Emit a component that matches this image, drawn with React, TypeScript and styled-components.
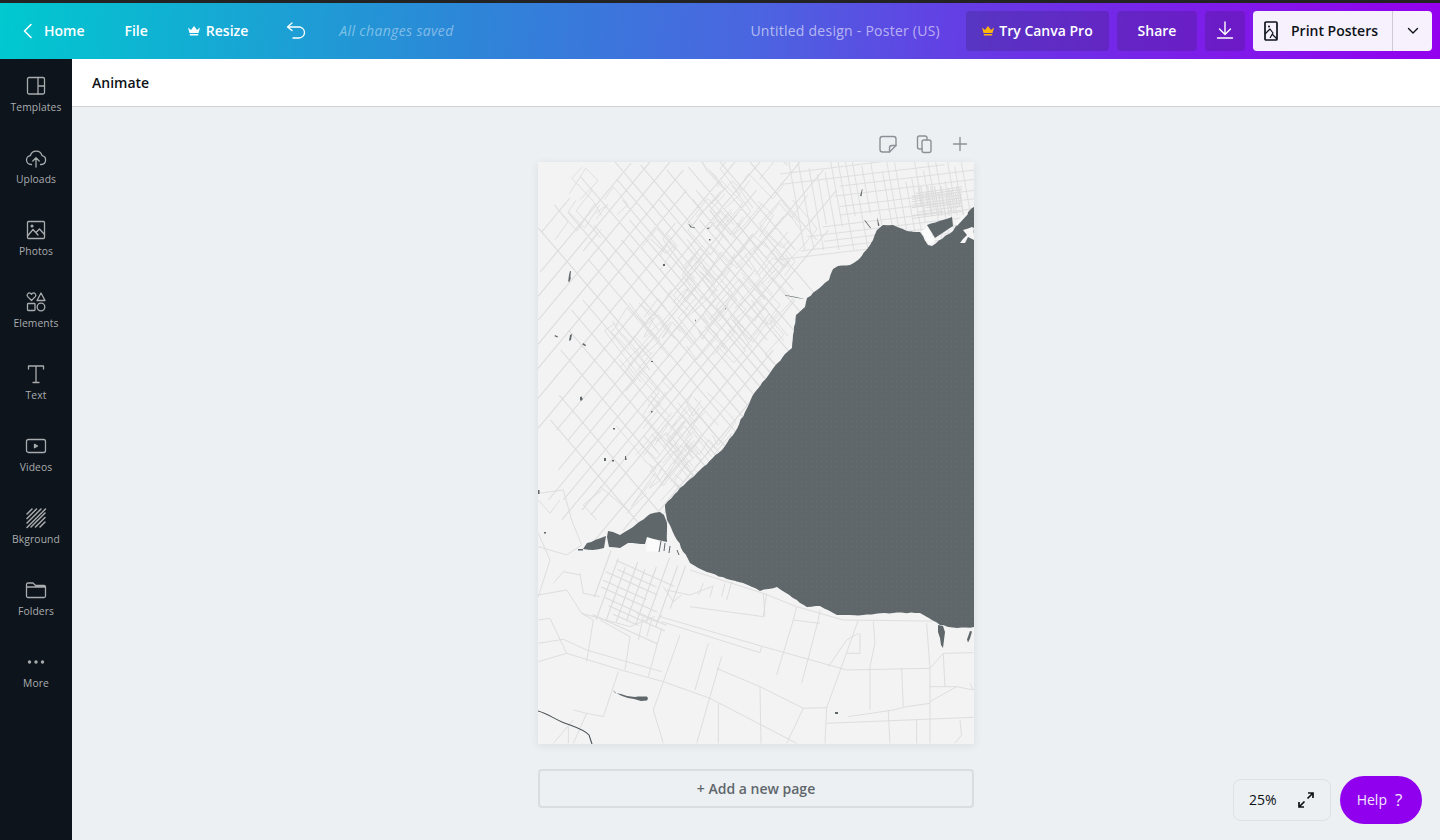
import React from 'react';
import styled, { createGlobalStyle } from 'styled-components';

const GlobalStyle = createGlobalStyle`
  html, body {
    margin: 0;
    padding: 0;
    height: 100%;
    overflow: hidden;
    background: #ecf0f3;
    font-family: "Open Sans", "Liberation Sans", sans-serif;
  }
  * { box-sizing: border-box; }
`;

const Shell = styled.div`
  display: flex;
  flex-direction: column;
  width: 1440px;
  height: 840px;
  position: relative;
  overflow: hidden;
`;

const TopStrip = styled.div`
  height: 3px;
  background: #232323;
`;

const TopBar = styled.header`
  height: 56px;
  display: flex;
  align-items: center;
  padding: 0 8px 0 22px;
  color: #fff;
  background: linear-gradient(93deg, #00c9cf 0%, #2e85d8 33%, #4a66e0 52%, #6a35e5 70%, #9400ee 100%);
`;

const NavItem = styled.div<{ $gap?: number; $left?: number }>`
  display: flex;
  align-items: center;
  gap: ${p => p.$gap ?? 0}px;
  margin-left: ${p => p.$left ?? 0}px;
  padding-bottom: 1px;
  font-size: 14px;
  font-weight: 600;
  white-space: nowrap;
`;

const Saved = styled.span`
  margin-left: 33px;
  padding-bottom: 1px;
  font-size: 14px;
  font-style: italic;
  letter-spacing: 0.35px;
  color: rgba(255, 255, 255, 0.42);
  white-space: nowrap;
`;

const Title = styled.span`
  margin-left: auto;
  margin-right: 26px;
  padding-bottom: 1px;
  font-size: 14px;
  font-weight: 500;
  letter-spacing: 0.25px;
  color: rgba(255, 255, 255, 0.58);
  white-space: nowrap;
`;

const BarButton = styled.button<{ $width: number }>`
  width: ${p => p.$width}px;
  height: 40px;
  margin-right: 8px;
  display: flex;
  align-items: center;
  justify-content: center;
  gap: 5px;
  padding: 0 0 2px;
  border: 0;
  border-radius: 4px;
  color: #fff;
  background: rgba(34, 28, 60, 0.2);
  font: 600 14px "Open Sans", sans-serif;
`;

const PrintGroup = styled.div`
  width: 179px;
  height: 40px;
  display: flex;
  border-radius: 4px;
  background: #f7f1fd;
  color: #0e1318;
  font-size: 14px;
  font-weight: 600;
`;

const PrintMain = styled.div`
  width: 140px;
  display: flex;
  align-items: center;
  gap: 12px;
  padding: 0 0 1px 10px;
  border-right: 1px solid #cfc9d6;
`;

const PrintCaret = styled.div`
  flex: 1;
  display: flex;
  align-items: center;
  justify-content: center;
`;

const Body = styled.div`
  flex: 1;
  display: flex;
  min-height: 0;
`;

const Sidebar = styled.nav`
  width: 72px;
  flex: none;
  background: #0e141b;
`;

const SideItem = styled.div`
  height: 72px;
  padding-top: 15px;
  display: flex;
  flex-direction: column;
  align-items: center;
  color: #a9acaf;
  font-size: 10.3px;
  font-weight: 500;
  line-height: 14px;
  letter-spacing: 0.1px;
`;

const SideIcon = styled.svg`
  width: 24px;
  height: 24px;
  margin-bottom: 2px;
  fill: none;
  stroke: currentColor;
  stroke-width: 1.3;
  stroke-linecap: round;
  stroke-linejoin: round;
`;

const Main = styled.main`
  flex: 1;
  display: flex;
  flex-direction: column;
  min-width: 0;
`;

const SubBar = styled.div`
  height: 48px;
  flex: none;
  display: flex;
  align-items: center;
  padding-left: 20px;
  background: #fff;
  border-bottom: 1px solid #cfd2d5;
  color: #0e1318;
  font-size: 14px;
  font-weight: 600;
`;

const Canvas = styled.div`
  flex: 1;
  display: flex;
  flex-direction: column;
  align-items: center;
  padding-top: 25px;
`;

const PageTools = styled.div`
  width: 436px;
  height: 24px;
  margin-bottom: 6px;
  padding-right: 2px;
  display: flex;
  justify-content: flex-end;
  gap: 12px;
  color: #8b9196;
`;

const ToolIcon = styled.svg`
  width: 24px;
  height: 24px;
  fill: none;
  stroke: currentColor;
  stroke-width: 1.4;
  stroke-linecap: round;
  stroke-linejoin: round;
`;

const Page = styled.svg`
  display: block;
  width: 436px;
  height: 582px;
  flex: none;
  background: #f3f3f3;
  box-shadow: 0 2px 8px rgba(60, 70, 80, 0.1);
`;

const AddPage = styled.button`
  width: 436px;
  height: 39px;
  margin-top: 25px;
  border: 2px solid #d8dde1;
  border-radius: 4px;
  background: transparent;
  color: #5f666c;
  font: 600 14px "Open Sans", sans-serif;
`;

const ZoomBox = styled.div`
  position: absolute;
  left: 1233px;
  top: 779px;
  width: 98px;
  height: 42px;
  display: flex;
  align-items: center;
  justify-content: space-between;
  padding: 0 15px 1px 15px;
  border: 1px solid #dde1e5;
  border-radius: 8px;
  color: #0e1318;
  font-size: 14px;
  font-weight: 500;
`;

const HelpButton = styled.div`
  position: absolute;
  left: 1340px;
  top: 776px;
  width: 82px;
  height: 48px;
  display: flex;
  align-items: center;
  justify-content: center;
  gap: 8px;
  padding: 0 3px 2px 0;
  border-radius: 24px;
  background: #9100ee;
  color: #f4e6ff;
  font-size: 14px;
`;

const HelpMark = styled.span`
  font-size: 17px;
  line-height: 1;
`;

const sideItems: { label: string; icon: React.ReactNode }[] = [
  { label: 'Templates', icon: <><rect x="3.500" y="3.500" width="17" height="16.500" rx="1.500" /><path d="M14 3.500V20M14 12h6.500" /></> },
  { label: 'Uploads', icon: <><path d="M7.500 18.500H7a4.500 4.500 0 0 1-.6-8.960A6 6 0 0 1 18 9.600a4.500 4.500 0 0 1-.6 8.900h-.9" /><path d="M12 21v-9M8.800 15 12 11.800 15.200 15" /></> },
  { label: 'Photos', icon: <><rect x="3.500" y="3.500" width="17" height="17" rx="1" /><circle cx="8" cy="8" r=".9" fill="currentColor" /><path d="M3.500 18 9 11.500l5 5.500M12 14.500l3.500-3.500 5 5.500" /></> },
  { label: 'Elements', icon: <><path d="M7.500 10.500 3.700 6.600a2.200 2.200 0 0 1 3.100-3.100l.7.7.7-.7a2.200 2.200 0 0 1 3.100 3.100z" /><path d="M17 3l4 7.500h-8z" /><rect x="3.500" y="13.500" width="7.500" height="7" rx=".8" /><circle cx="17" cy="17" r="3.800" /></> },
  { label: 'Text', icon: <path d="M4.500 7V4h15v3M12 4v16.500M9 20.500h6" /> },
  { label: 'Videos', icon: <><rect x="2.500" y="5.500" width="19" height="13" rx="2" /><path d="m10.500 10.300 3 1.700-3 1.700z" fill="currentColor" /></> },
  { label: 'Bkground', icon: <path d="M3 8l5-5M3 12.500 12.500 3M3 17 17 3M3 21.500 21.500 3M7 21 21 7M11.500 21 21 11.500M16 21l5-5" strokeWidth="1.500" /> },
  { label: 'Folders', icon: <path d="M2.500 18V6.500a1.500 1.500 0 0 1 1.500-1.500h5l2.500 2.500h8.500a1.500 1.500 0 0 1 1.500 1.500v9a1.500 1.500 0 0 1-1.500 1.500H4a1.500 1.500 0 0 1-1.500-1.500zM2.500 9h19" /> },
  { label: 'More', icon: <g fill="currentColor" stroke="none"><circle cx="5.500" cy="12" r="1.700" /><circle cx="12" cy="12" r="1.700" /><circle cx="18.500" cy="12" r="1.700" /></g> },
];

// small seeded random so the map is the same on every load
const makeRandom = (seed: number) => () => {
  seed = (seed * 16807) % 2147483647;
  return seed / 2147483647;
};

// shoreline: adds small notches between the traced points
const roughen = (points: number[][], seed: number, amount = 1.1) => {
  const rnd = makeRandom(seed);
  let d = '';
  points.forEach((pt, i) => {
    d += `${i ? 'L' : 'M'}${pt[0]} ${pt[1]}`;
    const next = points[i + 1];
    if (!next) return;
    const dist = Math.hypot(next[0] - pt[0], next[1] - pt[1]);
    const steps = Math.floor(dist / 4);
    for (let s = 1; s < steps; s++) {
      const t = s / steps;
      const x = pt[0] + (next[0] - pt[0]) * t + (rnd() - 0.5) * amount;
      const y = pt[1] + (next[1] - pt[1]) * t + (rnd() - 0.5) * amount;
      d += `L${x.toFixed(1)} ${y.toFixed(1)}`;
    }
  });
  return d + 'Z';
};

// long concession roads: [x where the line meets y=162, first y, last y]
const nwSe = [
  [330, 420, 540], [360, 395, 530], [400, 350, 560], [425, 330, 520], [445, 310, 560], [465, 300, 540],
  [482, 228, 500], [505, 260, 540], [525, 212, 480], [540, 225, 510], [555, 240, 500], [568, 177, 430],
  [580, 220, 470], [590, 200, 430], [602, 180, 440], [615, 162, 340], [627, 200, 420], [638, 165, 310],
  [650, 220, 380], [660, 170, 270], [672, 190, 350], [684, 167, 290], [702, 170, 300], [720, 162, 250], [750, 162, 240],
];

const neSw = [
  [600, 198, 232], [632, 163, 272], [650, 162, 300], [670, 162, 320], [690, 170, 345], [710, 190, 370],
  [735, 162, 400], [760, 162, 440], [780, 190, 430], [800, 162, 440], [815, 230, 470], [830, 170, 500],
  [845, 270, 500], [860, 190, 520], [872, 260, 510], [885, 230, 515], [910, 300, 540], [930, 350, 530], [950, 380, 530],
];

const concessions = () => {
  let d = '';
  nwSe.forEach(([c, y0, y1]) => {
    d += `M${(c + (y0 - 162) / 1.17).toFixed(1)} ${y0}L${(c + (y1 - 162) / 1.17).toFixed(1)} ${y1}`;
  });
  neSw.forEach(([c, y0, y1]) => {
    d += `M${(c - (y0 - 162) / 1.2).toFixed(1)} ${y0}L${(c - (y1 - 162) / 1.2).toFixed(1)} ${y1}`;
  });
  return d;
};

// suburb web: short bent pieces that follow the two road directions
const webRoads = (seed: number, count: number, cx: number, cy: number, rx: number, ry: number) => {
  const rnd = makeRandom(seed);
  let d = '';
  for (let i = 0; i < count; i++) {
    const angle = rnd() * Math.PI * 2;
    const reach = Math.sqrt(rnd());
    let x = cx + Math.cos(angle) * rx * reach;
    let y = cy + Math.sin(angle) * ry * reach;
    let alongNwSe = rnd() > 0.5;
    d += `M${x.toFixed(1)} ${y.toFixed(1)}`;
    const bends = 2 + Math.floor(rnd() * 3);
    for (let b = 0; b < bends; b++) {
      const len = 10 + rnd() * 24;
      const sign = rnd() > 0.5 ? 1 : -1;
      const dx = (alongNwSe ? 0.65 : -0.64) * len * sign;
      const dy = (alongNwSe ? 0.76 : 0.77) * len * sign;
      x += dx + (rnd() - 0.5) * 6;
      y += dy + (rnd() - 0.5) * 6;
      d += `L${x.toFixed(1)} ${y.toFixed(1)}`;
      if (rnd() > 0.35) alongNwSe = !alongNwSe;
    }
  }
  return d;
};

// straight street grid, walked with uneven spacing
const streetGrid = (
  seed: number, count: number, x0: number, y0: number,
  sx: number, sy: number, dx: number, dy: number, len: number,
) => {
  const rnd = makeRandom(seed);
  let d = '';
  let walk = 0;
  for (let i = 0; i < count; i++) {
    walk += 0.7 + rnd() * 0.6;
    const from = rnd() < 0.6 ? rnd() * len * 0.3 : 0;
    const to = rnd() < 0.6 ? len * (0.6 + rnd() * 0.4) : len;
    const ax = x0 + sx * walk;
    const ay = y0 + sy * walk;
    d += `M${(ax + dx * from).toFixed(1)} ${(ay + dy * from).toFixed(1)}L${(ax + dx * to).toFixed(1)} ${(ay + dy * to).toFixed(1)}`;
  }
  return d;
};

const lake = roughen([
  [974, 207], [972, 208], [956, 226], [953, 231], [932, 246], [928, 245], [920, 232], [915, 232], [907, 231],
  [893, 225], [883, 225], [877, 230], [873, 240], [870, 245], [858, 260], [850, 265], [838, 266], [833, 269],
  [829, 280], [817, 290], [807, 298], [805, 307], [796, 315], [793, 335], [792, 348], [785, 354], [770, 373],
  [755, 392], [745, 412], [735, 432], [722, 450], [700, 470], [680, 488], [665, 505], [665, 507], [667, 520],
  [677, 540], [690, 563], [707, 572], [727, 579], [743, 583], [760, 591], [777, 587], [793, 598], [807, 607],
  [820, 606], [837, 615], [863, 615], [893, 613], [920, 613], [940, 625], [957, 628], [974, 627],
], 5);

const harbour = roughen([
  [660, 512], [650, 514], [633, 527], [620, 535], [613, 532], [608, 531], [607, 537], [609, 547], [620, 548],
  [628, 543], [645, 544], [647, 537], [658, 540], [667, 542], [667, 523], [664, 515],
], 9, 0.6);

const harbourTail = roughen([
  [606, 536], [595, 540], [587, 543], [583, 549], [593, 550], [604, 548],
], 13, 0.8);

const innerBay = roughen([
  [927, 225], [952, 217], [953, 226], [944, 232], [935, 238], [932, 233],
], 17, 0.6);

const portLands = roughen([
  [960, 243], [967, 235], [963, 230], [972, 227], [974, 228], [974, 240], [968, 237], [965, 243],
], 19, 1);

const specks = [
  'M569 275l1-4 1 .300-.6 5 .4 2-1.600 4-1-1z',
  'M555 335l3 1.500-.5 1-3-1.200z',
  'M570 335l2-1-1 6-2 1z',
  'M583 343l3 2-.5 1.200-3-1.500z',
  'M613 690l2 3 6 1 6 2 8 1 3-.500 9 0 1 2-1 2-6 .500-7-2-6-1-6-2-6-3z',
  'M938 625l5 1 2 6-1 8-1 8-2-3-1-7-2-6z',
  'M970 631l2 .500-2 7-2 4-1-3z',
  'M835 712h3v2h-3zM580 397l2-.500v4h-2zM604 458h2v3h-2zM651 361h2v1h-2zM663 264h2v2h-2zM625 458h1.500v2h-1.500zM538 490h1.500v4h-1.500zM544 532h2v1.500h-2z',
  'M848 298l-1 4 1 .500 1-4zM804 299l-8-2-11-2 0 .500 10 2 8 1.500zM883 235l-2 4 1 .500zM860 196l2-7 .500.300-1 7zM865 220l6 8-.6.500-6-8zM877 217l1 9 1.500-.500z',
  'M689 224l3 3 3 .500-.5.800-4-1-2-3zM707 228l2-.500.500 1-2 .500zM709 239h1.500v1.500H709zM695 319l1 2-1 .500zM725 308l1 1-1 .500zM757 393l3 1-1 .500z',
  'M581 398h1.500v2H581zM651 411h1.500v1.500H651zM613 428h2v1.500h-2zM612 460h2v1.500h-2zM625 456h1v2h-1z',
];

// coordinates below were read in a crop at 3x, so they get a scale
const southRoads = [
  'M25 545L110 520L280 572L400 605L540 655L800 790',
  'M25 490L100 478L170 510L290 545L395 575',
  'M390 410L700 500L950 570L1200 565L1240 520L1330 518',
  'M395 425L690 518L695 500',
  'M800 380L940 420L1330 425',
  'M480 270L700 340L800 380',
  'M395 445L355 590', 'M450 465L400 605L370 690L400 790', 'M535 490L495 630', 'M575 530L540 650L500 790',
  'M560 565L690 620L820 685L770 790', 'M690 620L693 790',
  'M820 685L890 683L935 560L985 420', 'M790 420L740 585', 'M865 420L815 610', 'M985 460L950 480L895 560',
  'M950 520H990V460',
  'M1030 425L1035 490L1020 560L1020 690', 'M1190 430L1200 565L1200 790', 'M1115 565L1120 680',
  'M1240 520L1245 620', 'M1200 620H1280L1330 630', 'M1200 665L1280 620', 'M890 730L1330 712',
  'M955 710L1090 690L1130 680L1200 670', 'M1075 690L1080 790', 'M890 683L885 790', 'M565 670L565 790',
  'M170 700L220 710L265 575', 'M130 690L170 700L130 790', 'M115 740V790', 'M70 790L130 720', 'M1290 720L1295 765L1275 790',
  'M25 345L110 330L155 400L300 440L375 410', 'M25 420L60 415L110 520', 'M25 160L60 240L25 350', 'M100 30L125 120L155 195',
  'M100 30L25 40', 'M155 195L110 225L25 200', 'M200 120L160 75L215 30', 'M300 95L210 20', 'M350 40L290 100',
  'M155 400L190 420L170 545', 'M210 420L300 470L285 570', 'M480 380L700 410L710 340', 'M400 320L430 365L455 345',
  'M590 360L605 305', 'M575 350L585 310', 'M505 345L520 310', 'M540 350L550 315', 'M1160 790V720M1330 630L1320 610',
  'M410 330L480 345L545 320', 'M320 400L380 425L395 405', 'M340 410L325 480', 'M365 420L350 470', 'M150 280L160 340L210 350', 'M70 310L100 275L150 285',
  'M25 60L60 100L90 60', 'M800 380L790 420L870 430', 'M700 340L705 410', 'M870 390L865 420',
];

const concessionRoads = concessions();
const webNorth = webRoads(101, 46, 735, 235, 62, 62);
const webMiddle = webRoads(131, 30, 725, 300, 55, 40);
const webWest = webRoads(151, 18, 632, 338, 32, 24);
const webSouth = webRoads(171, 46, 690, 445, 52, 58);
const webOther = webRoads(191, 8, 590, 205, 28, 18);
const cityV = streetGrid(69, 24, 782, 155, 8, 0, 0.18, 1, 95);
const cityH = streetGrid(73, 11, 780, 168, 0, 8.500, 1, -0.12, 200);
const downtownV = streetGrid(81, 14, 916, 186, 3.200, 0, 0.15, 1, 30);
const downtownH = streetGrid(85, 10, 912, 192, 0, 2.800, 1, -0.14, 50);
const hamiltonA = streetGrid(7, 9, 605, 550, 8.500, 1, -0.36, 1, 68);
const hamiltonB = streetGrid(11, 9, 612, 552, -2.500, 8, 1, 0.45, 68);

const Poster = () => (
  <Page viewBox="538 162 436 582">
    <defs>
      <pattern id="lake-dots" width="5" height="5" patternUnits="userSpaceOnUse">
        <circle cx="1.500" cy="1.500" r=".5" fill="#6b7377" />
      </pattern>
    </defs>

    <g fill="none" stroke="#dcdcdc" strokeLinejoin="round" strokeWidth="1.100">
      <path d={concessionRoads} />
      <g strokeWidth="0.9">
        <path d={webNorth} />
        <path d={webMiddle} />
        <path d={webWest} />
        <path d={webSouth} />
        <path d={webOther} />
        <path d={cityV} />
        <path d={cityH} />
      </g>
      <path d={downtownV} />
      <path d={downtownH} />
      <path d={hamiltonA} />
      <path d={hamiltonB} />
      <g transform="translate(530 480) scale(0.3333)" strokeWidth="2.800">
        {southRoads.map(d => <path key={d} d={d} />)}
      </g>
    </g>

    <path d="M921 231L928 227L935 241L929 245Z" fill="#fbfbfb" />
    <path d="M647 537L658 539L660 552L646 551Z" fill="#fbfbfb" />
    <path d={lake} fill="#5f676b" />
    <path d={lake} fill="url(#lake-dots)" />
    <path d={harbour} fill="#5f676b" />
    <path d={harbourTail} fill="#5f676b" />
    <path d={innerBay} fill="#5f676b" />
    <path d={portLands} fill="#f6f6f6" />
    <path d="M954 223L967 212L968 214L957 226Z" fill="#f6f6f6" />
    <path d="M578 549h5v1.500h-5z" fill="#5f676b" />
    <path d="M661 541l-2 11M665 543l-1 8M670 546l-1 7M677 550l2 5" stroke="#5f676b" strokeWidth="1" fill="none" />
    {specks.map(d => <path key={d} d={d} fill="#5f676b" />)}
    <path d="M538 711C546 713 553 718 562 722C572 726 584 729 589 735L592 744" fill="none" stroke="#4b5256" strokeWidth="1.100" />
  </Page>
);

export default function App() {
  return (
    <Shell>
      <GlobalStyle />
      <TopStrip />
      <TopBar>
        <NavItem $gap={10}>
          <svg width="12" height="16" viewBox="0 0 12 16" fill="none" stroke="#fff" strokeWidth="1.600" strokeLinecap="round" strokeLinejoin="round">
            <path d="M9 1.500 2.500 8 9 14.500" />
          </svg>
          Home
        </NavItem>
        <NavItem $left={40}>File</NavItem>
        <NavItem $left={40} $gap={6}>
          <svg width="12" height="11" viewBox="0 0 12 11" fill="#fff">
            <path d="M0 2.500 3 5 6 1l3 4 3-2.500L10.500 8h-9zM1.800 9h8.400v1.500H1.800z" />
          </svg>
          Resize
        </NavItem>
        <NavItem $left={38}>
          <svg width="20" height="18" viewBox="0 0 20 18" fill="none" stroke="#fff" strokeWidth="1.300" strokeLinecap="round" strokeLinejoin="round">
            <path d="M6 1 1.500 5 6 8.500M1.500 5H13a5.500 5.500 0 0 1 0 11H7" />
          </svg>
        </NavItem>
        <Saved>All changes saved</Saved>
        <Title>Untitled design - Poster (US)</Title>
        <BarButton $width={143}>
          <svg width="12" height="11" viewBox="0 0 12 11" fill="#ffb60a">
            <path d="M0 2.500 3 5 6 1l3 4 3-2.500L10.500 8h-9zM1.800 9h8.400v1.500H1.800z" />
          </svg>
          Try Canva Pro
        </BarButton>
        <BarButton $width={80}>Share</BarButton>
        <BarButton $width={40}>
          <svg width="20" height="20" viewBox="0 0 20 20" fill="none" stroke="#fff" strokeWidth="1.400" strokeLinecap="round" strokeLinejoin="round">
            <path d="M10 2v12M4.500 9 10 14.500 15.500 9M2.500 18h15" />
          </svg>
        </BarButton>
        <PrintGroup>
          <PrintMain>
            <svg width="16" height="20" viewBox="0 0 16 20" fill="none" stroke="#0e1318" strokeWidth="1.700" strokeLinejoin="round">
              <rect x="2" y="1" width="12" height="18" rx="1" />
              <circle cx="6" cy="5.500" r="1" fill="#0e1318" stroke="none" />
              <path d="M2 13 7 8l3 4-3 5M9 13l5 5" strokeWidth="1.200" />
            </svg>
            Print Posters
          </PrintMain>
          <PrintCaret>
            <svg width="12" height="8" viewBox="0 0 12 8" fill="none" stroke="#0e1318" strokeWidth="1.400" strokeLinecap="round" strokeLinejoin="round">
              <path d="M1.500 1.500 6 6l4.500-4.500" />
            </svg>
          </PrintCaret>
        </PrintGroup>
      </TopBar>

      <Body>
        <Sidebar>
          {sideItems.map(item => (
            <SideItem key={item.label}>
              <SideIcon viewBox="0 0 24 24">{item.icon}</SideIcon>
              {item.label}
            </SideItem>
          ))}
        </Sidebar>
        <Main>
          <SubBar>Animate</SubBar>
          <Canvas>
            <PageTools>
              <ToolIcon viewBox="0 0 24 24">
                <path d="M6.500 4.500h11a2.500 2.500 0 0 1 2.500 2.500v6.500L13.500 20H6.500A2.500 2.500 0 0 1 4 17.500V7a2.500 2.500 0 0 1 2.500-2.500z" />
                <path d="M20 13.500h-4a2.500 2.500 0 0 0-2.500 2.500v4" />
              </ToolIcon>
              <ToolIcon viewBox="0 0 24 24">
                <rect x="10" y="8" width="9" height="12.500" rx="2" />
                <path d="M10 17H7.500a2 2 0 0 1-2-2V6a2 2 0 0 1 2-2h5.500a2 2 0 0 1 2 2v2" />
              </ToolIcon>
              <ToolIcon viewBox="0 0 24 24">
                <path d="M12 5.500v13M5.500 12h13" />
              </ToolIcon>
            </PageTools>
            <Poster />
            <AddPage>+ Add a new page</AddPage>
          </Canvas>
        </Main>
      </Body>

      <ZoomBox>
        25%
        <svg width="18" height="18" viewBox="0 0 18 18" fill="none" stroke="#0e1318" strokeWidth="1.700">
          <path d="M10.500 7.500 16 2M11 2h5v5M7.500 10.500 2 16M2 11v5h5" />
        </svg>
      </ZoomBox>
      <HelpButton>
        Help
        <HelpMark>?</HelpMark>
      </HelpButton>
    </Shell>
  );
}
